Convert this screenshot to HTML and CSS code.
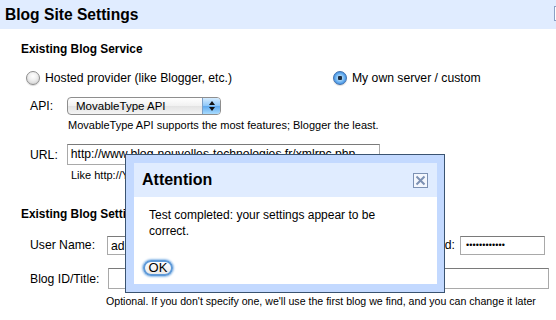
FILE: index.html
```html
<!DOCTYPE html>
<html>
<head>
<meta charset="utf-8">
<link rel="stylesheet" href="styles.css">
</head>
<body>
<div class="page">
  <div class="header">
    <span class="title">Blog Site Settings</span>
    <span class="hdr-icon"></span>
  </div>
  <div class="content">
    <h3 class="sect sect1">Existing Blog Service</h3>
    <div class="radios">
      <label class="radio-item r1"><span class="radio"></span>Hosted provider (like Blogger, etc.)</label>
      <label class="radio-item r2"><span class="radio checked"></span>My own server / custom</label>
    </div>
    <div class="row api-row">
      <span class="lbl">API:</span>
      <span class="select"><span class="sel-text">MovableType API</span><span class="sel-arrow"><span class="up"></span><span class="down"></span></span></span>
    </div>
    <div class="help help1">MovableType API supports the most features; Blogger the least.</div>
    <div class="row url-row">
      <span class="lbl">URL:</span>
      <span class="input url-input">http://www.blog-nouvelles-technologies.fr/xmlrpc.php</span>
    </div>
    <div class="help help2">Like http://YOURBLOG/xmlrpc.php</div>
    <h3 class="sect sect2">Existing Blog Settings</h3>
    <div class="row user-row">
      <span class="lbl lbl-user">User Name:</span>
      <span class="input user-input">admin</span>
      <span class="lbl lbl-pass">Password:</span>
      <span class="input pass-input">••••••••••••</span>
    </div>
    <div class="row blog-row">
      <span class="lbl lbl-blog">Blog ID/Title:</span>
      <span class="input blog-input"></span>
    </div>
    <div class="help help3">Optional. If you don't specify one, we'll use the first blog we find, and you can change it later</div>
  </div>

  <div class="dialog">
    <div class="dlg-inner">
      <div class="dlg-head">
        <span class="dlg-title">Attention</span>
        <span class="dlg-close"><svg width="11" height="11" viewBox="0 0 11 11"><path d="M1.5 1.5 L9.5 9.5 M9.5 1.5 L1.5 9.5" stroke="#7d91b3" stroke-width="2"/></svg></span>
      </div>
      <div class="dlg-body">
        <p class="dlg-msg">Test completed: your settings appear to be correct.</p>
        <span class="ok-btn">OK</span>
      </div>
    </div>
  </div>
</div>
</body>
</html>
```

FILE: styles.css
```css
html, body {
  margin: 0;
  padding: 0;
  background: #fff;
}
body {
  font-family: "Liberation Sans", Arial, sans-serif;
  font-size: 12.2px;
  color: #000;
  width: 556px;
  height: 320px;
  overflow: hidden;
}
.page {
  position: relative;
  width: 556px;
  height: 320px;
  overflow: hidden;
}
.header {
  height: 29px;
  background: #e0ecff;
  display: flex;
  align-items: center;
  justify-content: space-between;
  padding-left: 5px;
}
.title {
  font-weight: bold;
  font-size: 15.6px;
}
.hdr-icon {
  width: 13px;
  height: 13px;
  border: 1px solid #8aa0c4;
  margin-right: -13px;
  margin-top: -2px;
  background: #fff;
}
.content {
  padding-left: 21px;
}
.sect {
  margin: 0;
  font-size: 11.9px;
  font-weight: bold;
  line-height: 16px;
}
.sect1 {
  margin-top: 12px;
}
.radios {
  display: flex;
  margin-top: 11px;
  height: 20px;
  align-items: center;
}
.radio-item {
  display: flex;
  align-items: center;
}
.r1 {
  margin-left: 5px;
}
.r2 {
  margin-left: 101px;
}
.radio {
  width: 14px;
  height: 14px;
  border-radius: 50%;
  margin-right: 5px;
  box-sizing: border-box;
  border: 1px solid #8d8d8d;
  background: radial-gradient(circle at 50% 35%, #ffffff 0%, #f0f0f0 40%, #c9c9c9 100%);
  box-shadow: 0 1px 1px rgba(0,0,0,0.15);
}
.radio.checked {
  border-color: #3d6fae;
  background: radial-gradient(circle at 50% 50%, #1d2c3f 0 2px, #9fd0f7 2.5px, #5aa5ec 60%, #2d6ec6 100%);
}
.row {
  display: flex;
  align-items: center;
}
.lbl {
  padding-left: 9px;
  white-space: nowrap;
}
.api-row {
  margin-top: 8px;
  height: 19px;
}
.select {
  margin-left: 14px;
  width: 154px;
  height: 18px;
  box-sizing: border-box;
  border: 1px solid #8e8e8e;
  border-radius: 4px;
  background: linear-gradient(#ffffff, #f1f1f1 50%, #e3e3e3 51%, #f4f4f4);
  display: flex;
  align-items: center;
  justify-content: space-between;
  overflow: hidden;
  font-size: 11.5px;
}
.sel-text {
  padding-left: 8px;
}
.sel-arrow {
  width: 17px;
  height: 100%;
  background: linear-gradient(#d5ecff, #8cc6f8 50%, #5fa9ee 51%, #a9dcff);
  border-left: 1px solid #7b9fc7;
  display: flex;
  flex-direction: column;
  align-items: center;
  justify-content: center;
  gap: 2px;
}
.up {
  width: 0; height: 0;
  border-left: 3px solid transparent;
  border-right: 3px solid transparent;
  border-bottom: 4px solid #111;
}
.down {
  width: 0; height: 0;
  border-left: 3px solid transparent;
  border-right: 3px solid transparent;
  border-top: 4px solid #111;
}
.help {
  font-size: 11px;
  line-height: 14px;
  white-space: nowrap;
}
.help1 {
  margin-top: 3px;
  padding-left: 47px;
}
.url-row {
  margin-top: 12px;
  height: 21px;
}
.input {
  box-sizing: border-box;
  border: 1px solid #a9a9a9;
  border-top-color: #7a7a7a;
  background: #fff;
  height: 21px;
  line-height: 19px;
  padding-left: 3px;
  white-space: nowrap;
  overflow: hidden;
}
.url-input {
  margin-left: 9px;
  width: 313px;
}
.help2 {
  margin-top: 3px;
  padding-left: 50px;
}
.sect2 {
  margin-top: 24px;
}
.user-row {
  margin-top: 13px;
  height: 20px;
}
.user-input {
  margin-left: 12px;
  width: 60px;
  height: 19px;
}
.lbl-pass {
  margin-left: auto;
}
.user-row .lbl-pass {
  padding-left: 0;
}
.pass-input {
  margin-left: 5px;
  margin-right: 11px;
  width: 85px;
  height: 19px;
  font-size: 9px;
  letter-spacing: 0.1px;
  line-height: 17px;
  padding-left: 5px;
}
.blog-row {
  margin-top: 13px;
  height: 21px;
}
.blog-input {
  margin-left: 9px;
  width: 441px;
}
.help3 {
  margin-top: 5px;
  padding-left: 85px;
  font-size: 10.6px;
}

/* dialog overlay */
.dialog {
  position: absolute;
  left: 125px;
  top: 154px;
  width: 320px;
  height: 139px;
  box-sizing: border-box;
  border: 1px solid #3a5371;
  background: #c3d9ff;
  padding: 8px 7px 8px 8px;
}
.dlg-inner {
  background: #fff;
  height: 100%;
  display: flex;
  flex-direction: column;
}
.dlg-head {
  height: 34px;
  background: #e0ecff;
  display: flex;
  align-items: center;
  justify-content: space-between;
  padding: 0 9px 0 8px;
}
.dlg-title {
  font-weight: bold;
  font-size: 16px;
}
.dlg-close {
  width: 15px;
  height: 15px;
  box-sizing: border-box;
  border: 1px solid #7d91b3;
  background: #f4f7fd;
  display: flex;
  align-items: center;
  justify-content: center;
}
.dlg-body {
  padding: 10px 40px 0 15px;
}
.dlg-msg {
  margin: 0;
  font-size: 12px;
  line-height: 16px;
}
.ok-btn {
  display: inline-block;
  margin-top: 21px;
  margin-left: -6px;
  width: 30px;
  height: 16px;
  box-sizing: border-box;
  border-radius: 8px;
  border: 2px solid #5f9ad8;
  box-shadow: 0 0 2px 1px #8fbbe8;
  background: linear-gradient(#ffffff, #e9e9e9);
  text-align: center;
  line-height: 12px;
  font-size: 13px;
}
```
